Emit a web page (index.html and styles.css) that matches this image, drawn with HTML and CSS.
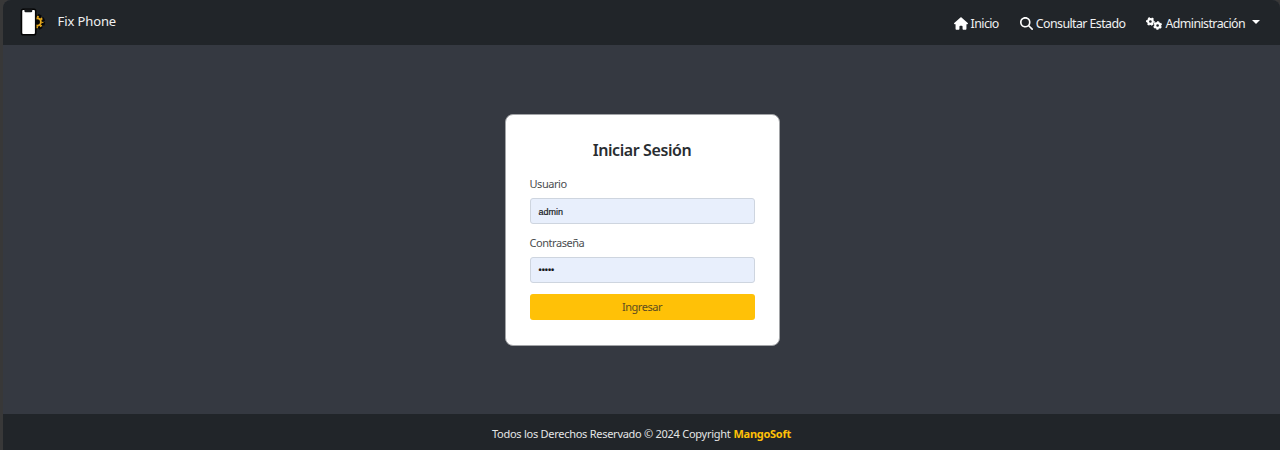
FILE: index.html
```html
<!DOCTYPE html>
<html lang="es">
<head>
<meta charset="utf-8">
<title>Fix Phone</title>
<link rel="stylesheet" href="styles.css">
</head>
<body>
<div class="app">
  <header class="navbar">
    <a class="brand">
      <svg class="logo" viewBox="0 0 26 28">
        <circle cx="17.500" cy="14" r="6.800" fill="#080808"/>
        <circle cx="17.500" cy="14" r="6.600" fill="none" stroke="#080808" stroke-width="3" stroke-dasharray="3.200 1.980"/>
        <circle cx="17.500" cy="14" r="3.800" fill="none" stroke="#e5a81c" stroke-width="1.900"/>
        <circle cx="17.500" cy="14" r="5.400" fill="none" stroke="#e5a81c" stroke-width="2" stroke-dasharray="2 2.240" stroke-dashoffset="1"/>
        <rect x="1.500" y="1" width="14.500" height="26" rx="1.800" fill="#fff" stroke="#050505" stroke-width="1.600"/>
        <path d="M4.500 1h8v1.800q0 1.200-1.200 1.200H5.700q-1.200 0-1.200-1.200z" fill="#17191b"/>
      </svg>
      <span class="brand-name">Fix Phone</span>
    </a>
    <nav class="menu">
      <a class="link"><svg class="icon house" viewBox="0 0 576 512"><path d="M575.8 255.5c0 18-15 32.1-32 32.1h-32l.7 160.2c0 2.700-.2 5.400-.5 8.100V472c0 22.100-17.900 40-40 40H392c-22.100 0-40-17.900-40-40V384c0-17.700-14.300-32-32-32H256c-17.700 0-32 14.300-32 32v88c0 22.100-17.900 40-40 40H104c-22.100 0-40-17.900-40-40V287.600H32c-18 0-32-14-32-32.100c0-9 3-17 10-24L266.400 8c7-7 15-8 22-8s15 2 21 7L564.800 231.500c8 7 12 15 11 24z"/></svg><span>Inicio</span></a>
      <a class="link"><svg class="icon search" viewBox="0 0 512 512"><path d="M416 208c0 45.900-14.900 88.300-40 122.700L502.600 457.400c12.500 12.500 12.500 32.800 0 45.300s-32.800 12.500-45.300 0L330.700 376c-34.400 25.200-76.800 40-122.700 40C93.100 416 0 322.900 0 208S93.100 0 208 0S416 93.100 416 208zM208 352a144 144 0 1 0 0-288 144 144 0 1 0 0 288z"/></svg><span>Consultar Estado</span></a>
      <a class="link"><svg class="icon gears" viewBox="0 0 16 13">
        <g fill="none" stroke="#fff">
          <circle cx="4.400" cy="4.500" r="2.400" stroke-width="2.100"/>
          <circle cx="4.400" cy="4.500" r="3.600" stroke-width="1.500" stroke-dasharray="2 1.770" stroke-dashoffset="1"/>
          <circle cx="11.600" cy="8.500" r="2.400" stroke-width="2.100"/>
          <circle cx="11.600" cy="8.500" r="3.600" stroke-width="1.500" stroke-dasharray="2 1.770" stroke-dashoffset="2.880"/>
        </g></svg><span>Administración</span><i class="caret"></i></a>
    </nav>
  </header>
  <main class="content">
    <form class="card">
      <h1 class="title">Iniciar Sesión</h1>
      <label class="label user">Usuario</label>
      <div class="field">admin</div>
      <label class="label pass">Contraseña</label>
      <div class="field"><span class="dots">•••••</span></div>
      <button class="submit" type="button">Ingresar</button>
    </form>
  </main>
  <footer class="footer"><span class="copy">Todos los Derechos Reservado © 2024 Copyright</span><b class="company">MangoSoft</b></footer>
</div>
</body>
</html>
```
FILE: styles.css
```css
* { box-sizing: border-box; }
body { margin: 0; background: #383838; font-family: "Noto Sans", "Open Sans", sans-serif; }
.app { height: 450px; margin-left: 3px; display: flex; flex-direction: column; background: #353941; border-radius: 8px 8px 0 0; overflow: hidden; }
.navbar { height: 45px; flex: none; padding: 0 20px 0 17px; display: flex; justify-content: space-between; align-items: center; background: #212529; color: #f0f1f1; }
.brand { display: flex; align-items: center; gap: 12px; height: 45px; padding-bottom: 1px; }
.logo { width: 25.500px; height: 28px; }
.brand-name { font-size: 13px; line-height: 20px; padding-bottom: 2px; letter-spacing: -0.1px; }
.menu { display: flex; gap: 21px; padding-top: 2px; }
.link { display: flex; align-items: center; font-size: 12.400px; line-height: 20px; letter-spacing: -0.580px; white-space: nowrap; }
.icon { fill: #fff; flex: none; margin-bottom: 1px; }
.house { width: 14px; height: 13px; margin-right: 3px; }
.search { width: 13px; height: 13px; margin-right: 3px; }
.gears { width: 16px; height: 13px; margin-right: 3px; }
.caret { margin: 0 0 3px 7px; border: 4px solid transparent; border-top-color: #fff; border-bottom: 0; }
.content { flex: 1; display: flex; justify-content: center; align-items: flex-start; padding-top: 69px; }
.card { width: 275px; height: 232px; margin-left: 1px; padding: 23px 24px 0; background: #fff; border: 1px solid #a2a4a7; border-radius: 8px; display: flex; flex-direction: column; color: #292d31; }
.title { margin: 0; text-align: center; font-size: 16px; font-weight: 600; line-height: 24px; letter-spacing: -0.400px; }
.label { font-size: 11px; line-height: 16px; letter-spacing: -0.450px; color: #4b4d50; }
.user { margin: 14px 0 6px; }
.pass { margin: 11px 0 6px; }
.field { height: 26px; padding: 1px 8px 0; display: flex; align-items: center; background: #e8effc; border: 1px solid #ced5df; border-radius: 3px; font: 9px "Liberation Sans", sans-serif; color: #17191c; -webkit-text-stroke: 0.2px #17191c; }
.dots { padding-bottom: 1px; }
.submit { height: 26px; margin-top: 11px; padding: 0 0 1px; border: 0; border-radius: 3px; background: #ffc107; color: #5d4c20; font: 11px "Noto Sans", sans-serif; letter-spacing: -0.450px; }
.footer { height: 36px; flex: none; padding-top: 2px; display: flex; justify-content: center; align-items: center; gap: 3px; background: #212529; color: #e4e5e6; font-size: 11px; letter-spacing: -0.270px; white-space: nowrap; }
.company { color: #ffc107; }
```
